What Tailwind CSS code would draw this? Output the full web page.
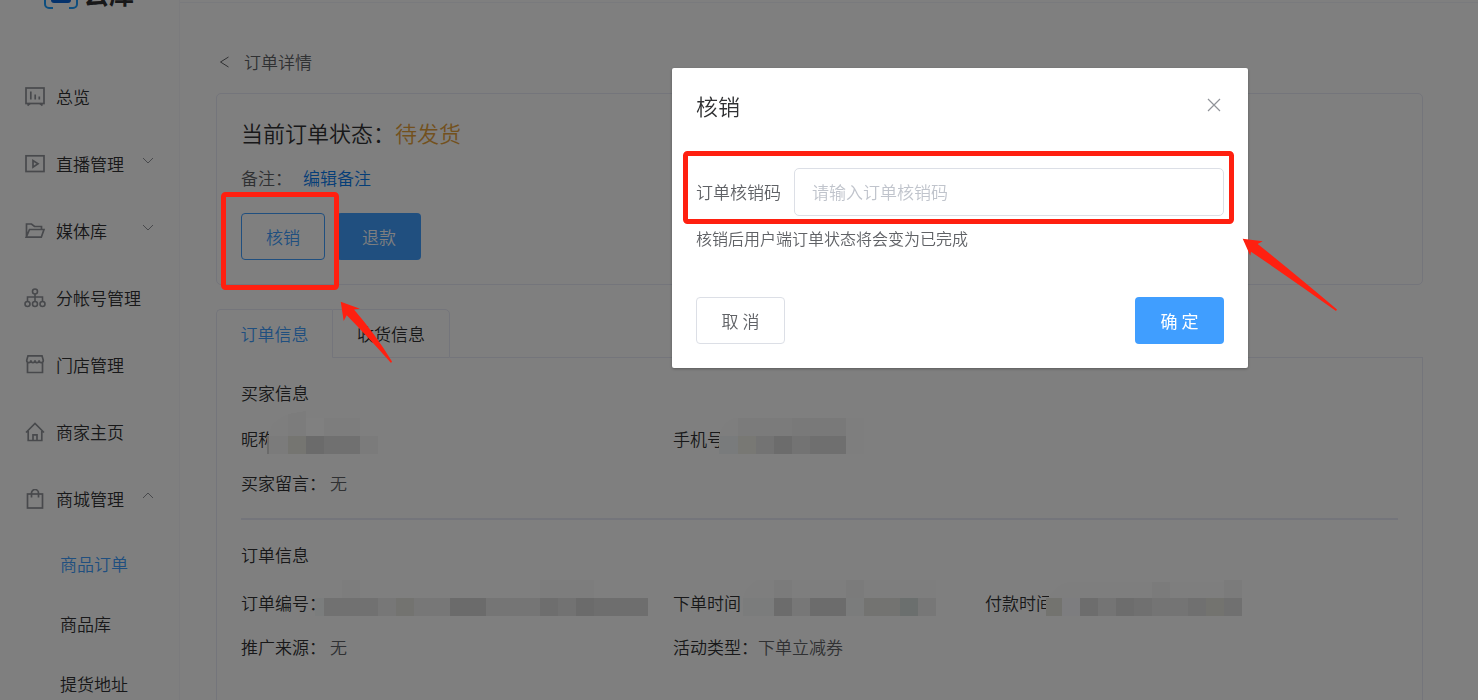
<!DOCTYPE html>
<html lang="zh-CN">
<head>
<meta charset="utf-8">
<meta name="viewport" content="width=device-width, initial-scale=1">
<title>订单详情</title>
<script src="https://cdn.jsdelivr.net/npm/@tailwindcss/browser@4"></script>
</head>
<body class="h-screen overflow-hidden bg-white font-['Noto_Sans_CJK_SC',sans-serif] text-[17px] leading-7 font-[350] text-[#303133]">
<div class="flex h-full">
  <aside class="w-[180px] shrink-0 overflow-hidden border-r border-[#f6f7fb]">
    <a href="#" aria-label="云库" class="-mt-7 mb-[53px] flex h-[38px] items-end gap-1.5 pl-11 text-[25px] leading-[34px] font-bold">
      <svg class="mb-px h-9 w-[34px] shrink-0" viewBox="0 0 34 36" fill="none" stroke="#1a9cff" stroke-width="2"><path d="M9 3H5a4 4 0 0 0-4 4v4M25 3h4a4 4 0 0 1 4 4v4M1 27v4a4 4 0 0 0 4 4h4M33 27v4a4 4 0 0 1-4 4h-4"/><rect x="7" y="16" width="20" height="14" rx="3" fill="#0a64d8" stroke="none"/></svg>
      <span>云库</span>
    </a>
    <nav>
      <a href="#" class="flex h-[67px] items-center pl-[25px]">
        <svg class="mr-[11px] size-5 shrink-0" viewBox="0 0 20 20" fill="none" stroke="#909399" stroke-width="1.700"><rect x="1" y="1" width="18" height="15.500"/><path d="M5.800 4.500v8M10.200 7.500v5M14.300 9.500v3M5 16.500l-2.500 2M15 16.500l2.500 2"/></svg>
        <span>总览</span>
      </a>
      <a href="#" class="flex h-[67px] items-center pl-[25px]">
        <svg class="mr-[11px] size-5 shrink-0" viewBox="0 0 20 20" fill="none" stroke="#909399" stroke-width="1.700"><rect x="1" y="1.800" width="18" height="15.700"/><path d="M8 6.500v6.600l5-3.300z"/></svg>
        <span>直播管理</span>
        <svg class="mb-[6px] ml-[18px] h-2 w-3" viewBox="0 0 12 8" fill="none" stroke="#909399"><path d="M1 1l5 5 5-5"/></svg>
      </a>
      <a href="#" class="flex h-[67px] items-center pl-[25px]">
        <svg class="mr-[11px] size-5 shrink-0" viewBox="0 0 20 20" fill="none" stroke="#909399" stroke-width="1.700"><path d="M1.500 16V3h5l3 2.500h7V8.500M1.200 16.200L4.500 8.500H19l-2.700 7.700z"/></svg>
        <span>媒体库</span>
        <svg class="mb-[6px] ml-[35px] h-2 w-3" viewBox="0 0 12 8" fill="none" stroke="#909399"><path d="M1 1l5 5 5-5"/></svg>
      </a>
      <a href="#" class="flex h-[67px] items-center pl-6">
        <svg class="mr-[10px] h-5 w-[22px] shrink-0" viewBox="0 0 22 20" fill="none" stroke="#909399" stroke-width="1.600"><circle cx="11" cy="3.500" r="2.500"/><circle cx="3.500" cy="16" r="2.500"/><circle cx="11" cy="16" r="2.500"/><circle cx="18.500" cy="16" r="2.500"/><path d="M11 6v7.500M3.500 13.500V9h15v4.500"/></svg>
        <span>分帐号管理</span>
      </a>
      <a href="#" class="flex h-[67px] items-center pl-[25px]">
        <svg class="mr-[11px] size-5 shrink-0" viewBox="0 0 20 20" fill="none" stroke="#909399" stroke-width="1.700"><path d="M2.500 8v9.500h15V8M3 .8h14l1.300 4.500c0 3.200-4.200 3.200-4.200 0 0 3.200-4.100 3.200-4.100 0 0 3.200-4.100 3.200-4.100 0 0 3.200-4.200 3.200-4.200 0z"/></svg>
        <span>门店管理</span>
      </a>
      <a href="#" class="flex h-[67px] items-center pl-[25px]">
        <svg class="mr-[11px] size-5 shrink-0" viewBox="0 0 20 20" fill="none" stroke="#909399" stroke-width="1.700"><path d="M1 10.500L10 1.500l9 9M3.200 9v9.500h13.600V9M8 18.500v-5.700h4v5.700"/></svg>
        <span>商家主页</span>
      </a>
      <a href="#" class="flex h-[67px] items-center pl-[25px]">
        <svg class="mr-[11px] size-5 shrink-0" viewBox="0 0 20 20" fill="none" stroke="#909399" stroke-width="1.700"><rect x="2.500" y="5" width="15" height="14"/><path d="M6.500 8.500V4a3.500 3.500 0 0 1 7 0v4.500"/></svg>
        <span>商城管理</span>
        <svg class="mb-[6px] ml-[18px] h-2 w-3" viewBox="0 0 12 8" fill="none" stroke="#909399"><path d="M1 6l5-5 5 5"/></svg>
      </a>
      <div class="pt-0.5">
        <a href="#" class="flex h-[60px] items-center pl-[60px] text-[#409eff]">商品订单</a>
        <a href="#" class="flex h-[60px] items-center pl-[60px]">商品库</a>
        <a href="#" class="flex h-[60px] items-center pl-[60px]">提货地址</a>
      </div>
    </nav>
  </aside>

  <main class="min-w-0 flex-1">
    <div class="h-[3px] border-b border-[#f2f4fa]"></div>
    <div class="flex h-full flex-col pr-[55px] pl-9">
      <a href="#" class="mt-[45px] flex h-7 items-center text-[#606266]">
        <svg class="mr-[15px] ml-[3px] h-3 w-[10px]" viewBox="0 0 10 12" fill="none" stroke="#606266"><path d="M9.500 1L1.500 6l8 5"/></svg>
        <h1>订单详情</h1>
      </a>
      <section class="mt-[17px] rounded-[5px] border border-[#e8eaf6] px-6 pt-[22px] pb-6">
        <h2 class="flex text-[22px] leading-[33px]">当前订单状态：<span class="text-[#e6a23c]">待发货</span></h2>
        <p class="mt-[15px] flex gap-[11px] text-[#606266]">备注：<a href="#" class="text-[#0a7cf0]">编辑备注</a></p>
        <div class="mt-[21px] flex gap-3">
          <button type="button" class="h-[47px] w-[84px] rounded-[4px] border border-[#409eff] text-[#409eff]">核销</button>
          <button type="button" class="h-[47px] w-[84px] rounded-[4px] bg-[#409eff] text-white">退款</button>
        </div>
      </section>

      <div role="tablist" class="mt-6 flex h-[49px] shrink-0">
        <button type="button" role="tab" aria-selected="true" class="w-[116px] rounded-tl-[5px] border-t border-l border-[#e8eaf6] text-[#409eff]">订单信息</button>
        <button type="button" role="tab" aria-selected="false" class="w-[118px] rounded-tr-[5px] border border-[#e8eaf6]">收货信息</button>
        <div class="flex-1 border-b border-[#e8eaf6]"></div>
      </div>
      <section class="flex-1 border-x border-[#e8eaf6] px-6 pt-[21px]">
        <h3>买家信息</h3>
        <div class="mt-[18px] grid grid-cols-[432px_312px_1fr]">
          <p>昵称：</p>
          <p>手机号：</p>
        </div>
        <p class="mt-4 flex gap-1">买家留言：<span class="text-[#606266]">无</span></p>
        <hr class="mt-[21px] border-t-2 border-[#e8eaf6]">
        <h3 class="mt-[21px]">订单信息</h3>
        <div class="mt-5 grid grid-cols-[432px_312px_1fr] gap-y-4">
          <p>订单编号：</p>
          <p>下单时间</p>
          <p>付款时间</p>
          <p class="flex gap-1">推广来源：<span class="text-[#606266]">无</span></p>
          <p>活动类型：<span class="text-[#606266]">下单立减券</span></p>
        </div>
      </section>
    </div>
  </main>
</div>

<div class="fixed inset-0 flex items-start justify-end bg-black/50 pt-[68px] pr-[230px]">
  <form role="dialog" aria-modal="true" aria-labelledby="dialog-title" class="w-[576px] rounded-[2px] bg-white px-6 pt-[22px] pb-6 text-[#606266] shadow-[0_1px_3px_rgba(0,0,0,0.3)]">
    <div class="flex items-center justify-between">
      <h2 id="dialog-title" class="text-[22px] leading-[30px] text-[#303133]">核销</h2>
      <button type="button" aria-label="关闭" class="mr-[3px]"><svg class="size-[14px]" viewBox="0 0 14 14" fill="none" stroke="#909399" stroke-width="1.200"><path d="M1 1l12 12M13 1L1 13"/></svg></button>
    </div>
    <div class="mt-12 flex items-center gap-[13px]">
      <label for="code">订单核销码</label>
      <input id="code" type="text" placeholder="请输入订单核销码" class="h-12 min-w-0 flex-1 rounded-[5px] border border-[#dcdfe6] px-[17px] pb-0.5 placeholder:text-[#c0c4cc]">
    </div>
    <p class="mt-2.5 text-[16px] leading-6">核销后用户端订单状态将会变为已完成</p>
    <div class="mt-[47px] flex justify-between">
      <button type="button" class="h-[47px] w-[89px] rounded-[4px] border border-[#dcdfe6]">取 消</button>
      <button type="submit" class="h-[47px] w-[89px] rounded-[4px] bg-[#409eff] font-normal text-white">确 定</button>
    </div>
  </form>
</div>

<!-- Pixelated private values, highlight frames and arrows, above the dialog -->
<svg class="pointer-events-none fixed top-0 left-0 h-[700px] w-[1478px]" viewBox="0 0 1478 700" aria-hidden="true">
  <g shape-rendering="crispEdges">
    <path fill="#7e7e7e" d="M268 454V436l4-11q10-12 34-14v43z"/>
    <path fill="#7c7c7c" d="M288 414l18-3v25h-18z"/>
    <path fill="#808080" d="M306 418h18v18h-18z"/>
    <path fill="#7d7d7d" d="M324 418h36v18h-36z"/>
    <path fill="#7b7b7b" d="M268 436h20v18h-20zM360 436h18v18h-18z"/>
    <path fill="#757571" d="M288 436h18v18h-18z"/>
    <path fill="#6b6b6b" d="M306 436h18v18h-18z"/>
    <path fill="#707070" d="M324 436h36v18h-36z"/>
    <path fill="#6a6a6a" d="M267 436h2v18h-2z"/>

    <path fill="#7e7e7e" d="M719 454V436q3-14 15-18h4v36zM846 418h18v36h-18z"/>
    <path fill="#7b7b7b" d="M738 418h54v18h-54z"/>
    <path fill="#797979" d="M792 418h54v18h-54z"/>
    <path fill="#797b7c" d="M719 436h19v18h-19z"/>
    <path fill="#787874" d="M738 436h18v18h-18z"/>
    <path fill="#737373" d="M756 436h18v18h-18zM792 436h18v18h-18z"/>
    <path fill="#6c6c6c" d="M774 436h18v18h-18z"/>
    <path fill="#6f6f6f" d="M810 436h36v18h-36z"/>

    <path fill="#7f7f7f" d="M315 598l9-18h324v18z"/>
    <path fill="#7d7d7d" d="M342 580h18v18h-18zM540 580h54v18h-54z"/>
    <path fill="#7b7d7d" d="M315 598h9v18h-9z"/>
    <path fill="#717171" d="M324 598h54v18h-54z"/>
    <path fill="#777" d="M378 598h18v18h-18zM414 598h36v18h-36z"/>
    <path fill="#737370" d="M396 598h18v18h-18z"/>
    <path fill="#6b6b6b" d="M450 598h36v18h-36zM576 598h18v18h-18z"/>
    <path fill="#757575" d="M486 598h54v18h-54z"/>
    <path fill="#6e6e6e" d="M540 598h18v18h-18zM594 598h54v18h-54z"/>
    <path fill="#727272" d="M558 598h18v18h-18z"/>

    <path fill="#7e7e7e" d="M743 598q2-12 14-18h179v18z"/>
    <path fill="#7b7b7b" d="M774 580h18v18h-18zM846 580h18v18h-18z"/>
    <path fill="#7b7c7c" d="M743 598h31v18h-31zM846 598h18v18h-18z"/>
    <path fill="#6c6c6c" d="M774 598h18v18h-18zM810 598h36v18h-36z"/>
    <path fill="#777" d="M792 598h18v18h-18zM918 598h18v18h-18z"/>
    <path fill="#737371" d="M864 598h36v18h-36z"/>
    <path fill="#6b6f6e" d="M900 598h18v18h-18z"/>

    <path fill="#7e7e7e" d="M1048 598q6-12 20-16h174v16z"/>
    <path fill="#7b7b7b" d="M1152 582h18v16h-18zM1224 580h18v18h-18z"/>
    <path fill="#73736f" d="M1046 598h16v18h-16zM1206 598h18v18h-18z"/>
    <path fill="#7d7d7f" d="M1062 598h18v18h-18z"/>
    <path fill="#6d6d6d" d="M1080 598h18v18h-18zM1116 598h18v18h-18z"/>
    <path fill="#747474" d="M1098 598h18v18h-18zM1152 598h36v18h-36z"/>
    <path fill="#707070" d="M1134 598h18v18h-18zM1188 598h18v18h-18zM1224 598h18v18h-18z"/>
  </g>
  <g fill="none" stroke="#ff2010" stroke-width="5">
    <rect x="223.500" y="194.500" width="113" height="93" rx="2"/>
    <rect x="685.500" y="153.500" width="546" height="68" rx="2"/>
  </g>
  <g fill="#ff2010">
    <path d="M340.700 301.700L360 308.700 354 309.500Q376 335 392 361.500L391 363Q368 337 346.700 315.300L343.700 321z"/>
    <path d="M1242.700 238.700L1262.700 241.300 1257.700 244Q1300 278 1337 309.500L1336 311Q1294 281 1251 251.700L1250.300 255.700z"/>
  </g>
</svg>
</body>
</html>
